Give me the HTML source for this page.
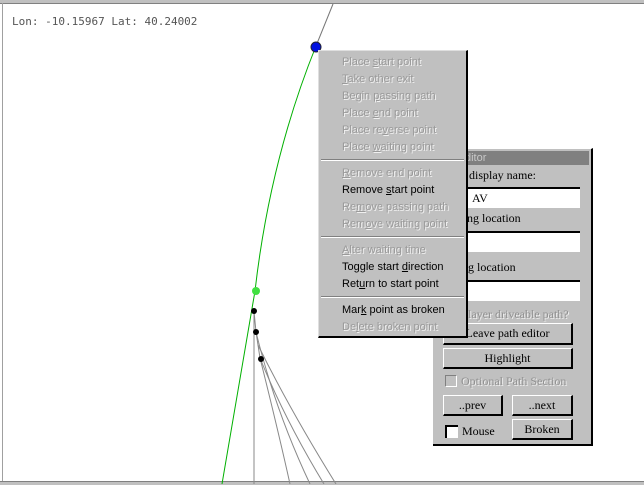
<!DOCTYPE html>
<html><head><style>
body{margin:0;width:644px;height:484px;overflow:hidden;background:#fff;position:relative;font-family:"Liberation Sans",sans-serif}
.abs{position:absolute}
.menu{left:318px;top:50px;width:150px;height:288px;background:#c0c0c0;border-top:1px solid #dfdfdf;border-left:1px solid #dfdfdf;border-right:2px solid #000;border-bottom:2px solid #000;box-sizing:border-box}
.mi{position:absolute;left:23px;font-size:11px;line-height:14px;color:#000;white-space:nowrap}
.dis{color:#9a9a9a;text-shadow:1px 1px 0 #f0f0f0}
.sep{position:absolute;left:2px;right:2px;height:0;border-top:1px solid #808080;border-bottom:1px solid #fff}
.panel{left:433px;top:148px;width:160px;height:298px;background:#c0c0c0;border-top:1px solid #fff;border-right:2px solid #000;border-bottom:2px solid #000;box-sizing:border-box;font-family:"Liberation Serif",serif;font-size:12px}
.inp{position:absolute;left:10px;width:137px;height:21px;background:#fff;border-top:2px solid #000;border-left:2px solid #000;box-sizing:border-box}
.btn{position:absolute;background:#c0c0c0;border-top:1px solid #fff;border-left:1px solid #fff;border-right:2px solid #000;border-bottom:2px solid #000;box-sizing:border-box;text-align:center;line-height:18px;font-size:12px}
.lbl{position:absolute;left:12px;font-size:12px;white-space:nowrap}
u{text-decoration:underline}
</style></head><body>
<div class="abs" style="left:0;top:0;width:644px;height:3px;background:#c0c0c0;border-bottom:1px solid #808080"></div>
<div class="abs" style="left:2px;top:3px;width:1px;height:481px;background:#a0a0a0"></div>
<div class="abs" style="left:0;top:481px;width:644px;height:3px;background:#c0c0c0;border-top:1px solid #808080"></div>
<div class="abs" style="left:12px;top:15px;font-family:'DejaVu Sans Mono','Liberation Mono',monospace;font-size:11px;color:#555">Lon: -10.15967 Lat: 40.24002</div>
<svg class="abs" style="left:0;top:0" width="644" height="484">
<path d="M333 4 L316 46" stroke="#777" fill="none"/>
<path d="M316 46 Q270 160 255 291 L222 484" stroke="#00b000" fill="none"/>
<path d="M254 310 L254 484" stroke="#888" fill="none"/>
<path d="M254 311 L256 332 L260 358 Q278 430 290 484" stroke="#888" fill="none"/>
<path d="M256 332 Q275 410 310 484" stroke="#888" fill="none"/>
<path d="M260 358 Q285 420 324 484" stroke="#888" fill="none"/>
<path d="M258 345 Q290 410 336 484" stroke="#888" fill="none"/>
<circle cx="316" cy="47" r="5" fill="#0010e0" stroke="#223" stroke-width="1"/>
<circle cx="256" cy="291" r="4" fill="#40e040"/>
<circle cx="254" cy="311" r="3" fill="#000"/>
<circle cx="256" cy="332" r="3" fill="#000"/>
<circle cx="261" cy="359" r="3" fill="#000"/>
</svg>
<div class="abs panel">
<div class="abs" style="left:2px;top:2px;width:154px;height:14px;background:#808080;color:#c8c8c8;font-family:'Liberation Sans',sans-serif;font-size:11px;line-height:14px;padding-left:30px;box-sizing:border-box">ditor</div>
<div class="lbl" style="top:19px;left:36px">display name:</div>
<div class="inp" style="top:38px"><span style="position:absolute;left:27px;top:2px;font-size:12px">AV</span></div>
<div class="lbl" style="top:62px;left:34px">ng location</div>
<div class="inp" style="top:82px"></div>
<div class="lbl" style="top:111px;left:35px">g location</div>
<div class="inp" style="top:131px"></div>
<div class="lbl" style="top:158px;left:35px;color:#909090;text-shadow:1px 1px 0 #eee">layer driveable path?</div>
<div class="btn" style="left:10px;top:174px;width:130px;height:22px">Leave path editor</div>
<div class="btn" style="left:10px;top:199px;width:130px;height:21px">Highlight</div>
<div class="abs" style="left:12px;top:226px;width:12px;height:12px;border-top:1px solid #808080;border-left:1px solid #808080;border-right:1px solid #fff;border-bottom:1px solid #fff;box-sizing:border-box"></div>
<div class="lbl" style="top:225px;left:28px;color:#909090;text-shadow:1px 1px 0 #eee">Optional Path Section</div>
<div class="btn" style="left:10px;top:246px;width:60px;height:21px">..prev</div>
<div class="btn" style="left:79px;top:246px;width:61px;height:21px">..next</div>
<div class="btn" style="left:79px;top:270px;width:61px;height:21px">Broken</div>
<div class="abs" style="left:12px;top:276px;width:13px;height:13px;background:#fff;border-top:2px solid #000;border-left:2px solid #000;box-sizing:border-box"></div>
<div class="lbl" style="top:275px;left:29px">Mouse</div>
</div>
<div class="abs menu">
<div class="mi dis" style="top:4px">Place <u>s</u>tart point</div>
<div class="mi dis" style="top:21px"><u>T</u>ake other exit</div>
<div class="mi dis" style="top:38px">Begin <u>p</u>assing path</div>
<div class="mi dis" style="top:55px">Place <u>e</u>nd point</div>
<div class="mi dis" style="top:72px">Place re<u>v</u>erse point</div>
<div class="mi dis" style="top:89px">Place <u>w</u>aiting point</div>
<div class="sep" style="top:108px"></div>
<div class="mi dis" style="top:115px"><u>R</u>emove end point</div>
<div class="mi" style="top:132px">Remove <u>s</u>tart point</div>
<div class="mi dis" style="top:149px">Re<u>m</u>ove passing path</div>
<div class="mi dis" style="top:166px">Rem<u>o</u>ve waiting point</div>
<div class="sep" style="top:185px"></div>
<div class="mi dis" style="top:192px"><u>A</u>lter waiting time</div>
<div class="mi" style="top:209px">Toggle start <u>d</u>irection</div>
<div class="mi" style="top:226px">Ret<u>u</u>rn to start point</div>
<div class="sep" style="top:245px"></div>
<div class="mi" style="top:252px">Mar<u>k</u> point as broken</div>
<div class="mi dis" style="top:269px">De<u>l</u>ete broken point</div>
</div>
</body></html>
